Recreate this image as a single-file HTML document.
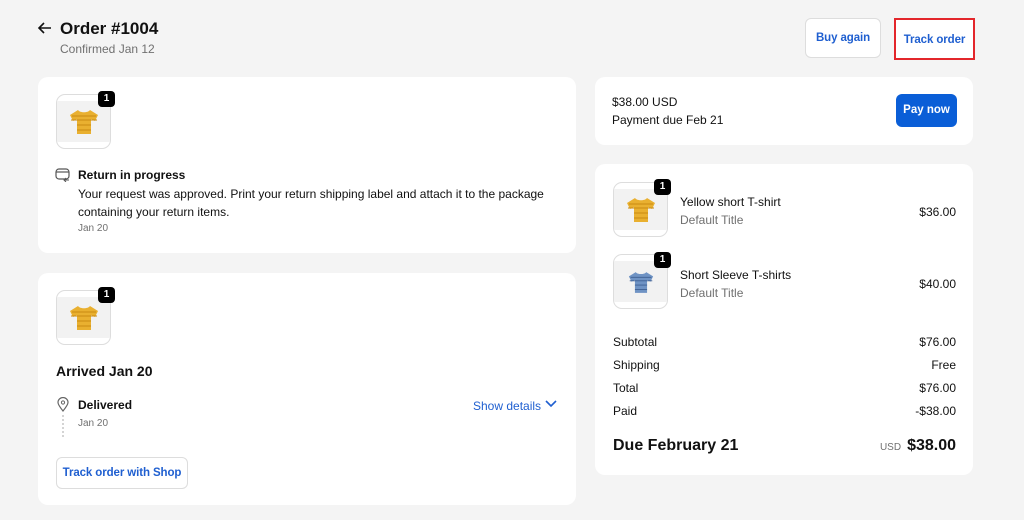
<!DOCTYPE html>
<html><head><meta charset="utf-8"><style>
*{box-sizing:border-box;margin:0;padding:0}
body{width:1024px;height:520px;background:#f4f4f4;font-family:"Liberation Sans",sans-serif;color:#111;position:relative;overflow:hidden;font-size:12px}
.a{position:absolute}
.card{position:absolute;background:#fff;border-radius:10px}
.thumb{position:absolute;width:55px;height:55px;border:1px solid #ddd;border-radius:9px;background:#fff;overflow:hidden}
.thumb .bg{position:absolute;left:0;right:0;top:6px;bottom:6px;background:#f2f2f2}
.badge{position:absolute;width:17px;height:16px;background:#000;color:#fff;border-radius:4px;font-size:10px;font-weight:bold;text-align:center;line-height:16px}
.gray{color:#707070}
.blue{color:#1f5fd0}
.btn{position:absolute;background:#fff;border:1px solid #ddd;border-radius:6px;color:#1f5fd0;font-weight:bold;text-align:center;font-size:11.5px;letter-spacing:-0.1px}
.r{position:absolute;right:17px;text-align:right}
</style></head><body>
<svg class="a" style="left:37px;top:21px" width="16" height="14" viewBox="0 0 16 14"><path d="M14 7H2M7 2L2 7l5 5" stroke="#111" stroke-width="1.6" fill="none"/></svg>
<div class="a" style="left:60px;top:19px;font-size:17px;font-weight:bold">Order #1004</div>
<div class="a gray" style="left:60px;top:42px;font-size:12px">Confirmed Jan 12</div>
<div class="btn" style="left:805px;top:18px;width:76px;height:40px;line-height:38px">Buy again</div>
<div class="btn" style="left:894px;top:18px;width:81px;height:42px;line-height:40px;border:2px solid #e3262b;border-radius:0">Track order</div>

<div class="card" style="left:38px;top:77px;width:538px;height:176px">
<div class="thumb" style="left:18px;top:17px"><div class="bg"></div><svg class="a" style="left:11px;top:13px" width="32" height="28" viewBox="0 0 30 28"><path d="M9 2L1 7l3 6 4-2v15h14V11l4 2 3-6-8-5c-2 3-10 3-12 0z" fill="#e9b030"/><path d="M3 8h24M2 12h26M8 17h14M8 22h14" stroke="#c98a12" stroke-width="1"/></svg></div>
<div class="badge" style="left:60px;top:14px">1</div>
<svg class="a" style="left:17px;top:91px" width="15" height="14" viewBox="0 0 15 14"><rect x="1" y="1" width="13" height="10" rx="3" stroke="#555" fill="none" stroke-width="1.2"/><path d="M1 4h13" stroke="#555" stroke-width="1.2"/><path d="M9 12h5M11 10l-2 2 2 2" stroke="#555" fill="none"/></svg>
<div class="a" style="left:40px;top:91px;font-weight:bold">Return in progress</div>
<div class="a" style="left:40px;top:108px;width:480px;line-height:18px">Your request was approved. Print your return shipping label and attach it to the package containing your return items.</div>
<div class="a gray" style="left:40px;top:146px;font-size:10px">Jan 20</div>
</div>

<div class="card" style="left:38px;top:273px;width:538px;height:232px">
<div class="thumb" style="left:18px;top:17px"><div class="bg"></div><svg class="a" style="left:11px;top:13px" width="32" height="28" viewBox="0 0 30 28"><path d="M9 2L1 7l3 6 4-2v15h14V11l4 2 3-6-8-5c-2 3-10 3-12 0z" fill="#e9b030"/><path d="M3 8h24M2 12h26M8 17h14M8 22h14" stroke="#c98a12" stroke-width="1"/></svg></div>
<div class="badge" style="left:60px;top:14px">1</div>
<div class="a" style="left:18px;top:90px;font-size:14px;font-weight:bold">Arrived Jan 20</div>
<svg class="a" style="left:19px;top:124px" width="12" height="42" viewBox="0 0 12 42"><path d="M6 14C2 9 1 7 1 5.5a5 5 0 0110 0C11 7 10 9 6 14z" stroke="#666" fill="none" stroke-width="1.2"/><circle cx="6" cy="5.5" r="1.6" stroke="#666" fill="none"/><path d="M6 18v24" stroke="#aaa" stroke-dasharray="2 2"/></svg>
<div class="a" style="left:40px;top:125px;font-weight:bold">Delivered</div>
<div class="a gray" style="left:40px;top:145px;font-size:10px">Jan 20</div>
<div class="a blue" style="left:435px;top:126px">Show details</div>
<svg class="a" style="left:507px;top:127px" width="12" height="8" viewBox="0 0 12 8"><path d="M1 1l5 5 5-5" stroke="#1f5fd0" stroke-width="1.6" fill="none"/></svg>
<div class="btn" style="left:18px;top:184px;width:132px;height:32px;line-height:30px">Track order with Shop</div>
</div>

<div class="card" style="left:595px;top:77px;width:378px;height:68px">
<div class="a" style="left:17px;top:18px">$38.00 USD</div>
<div class="a" style="left:17px;top:36px">Payment due Feb 21</div>
<div class="a" style="left:301px;top:17px;width:61px;height:33px;background:#0a5ed7;border-radius:6px;color:#fff;font-weight:bold;text-align:center;line-height:33px;font-size:11.5px">Pay now</div>
</div>

<div class="card" style="left:595px;top:164px;width:378px;height:311px">
<div class="thumb" style="left:18px;top:18px"><div class="bg"></div><svg class="a" style="left:11px;top:13px" width="32" height="28" viewBox="0 0 30 28"><path d="M9 2L1 7l3 6 4-2v15h14V11l4 2 3-6-8-5c-2 3-10 3-12 0z" fill="#e9b030"/><path d="M3 8h24M2 12h26M8 17h14M8 22h14" stroke="#c98a12" stroke-width="1"/></svg></div>
<div class="badge" style="left:59px;top:15px">1</div>
<div class="a" style="left:85px;top:31px">Yellow short T-shirt</div>
<div class="a gray" style="left:85px;top:49px">Default Title</div>
<div class="r" style="top:41px">$36.00</div>
<div class="thumb" style="left:18px;top:90px"><div class="bg"></div><svg class="a" style="left:14px;top:15px" width="26" height="25" viewBox="0 0 30 28"><path d="M9 2L1 7l3 6 4-2v15h14V11l4 2 3-6-8-5c-2 3-10 3-12 0z" fill="#6f93c4"/><path d="M3 8h24M2 12h26M8 17h14M8 22h14" stroke="#3e5f92" stroke-width="1"/></svg></div>
<div class="badge" style="left:59px;top:88px">1</div>
<div class="a" style="left:85px;top:104px">Short Sleeve T-shirts</div>
<div class="a gray" style="left:85px;top:122px">Default Title</div>
<div class="r" style="top:113px">$40.00</div>
<div class="a" style="left:18px;top:171px">Subtotal</div><div class="r" style="top:171px">$76.00</div>
<div class="a" style="left:18px;top:194px">Shipping</div><div class="r" style="top:194px">Free</div>
<div class="a" style="left:18px;top:217px">Total</div><div class="r" style="top:217px">$76.00</div>
<div class="a" style="left:18px;top:240px">Paid</div><div class="r" style="top:240px">-$38.00</div>
<div class="a" style="left:18px;top:273px;font-size:16px;font-weight:bold">Due February 21</div>
<div class="r" style="top:273px;font-size:16px;font-weight:bold"><span class="gray" style="font-size:10px;font-weight:normal;margin-right:6px">USD</span>$38.00</div>
</div>
</body></html>
